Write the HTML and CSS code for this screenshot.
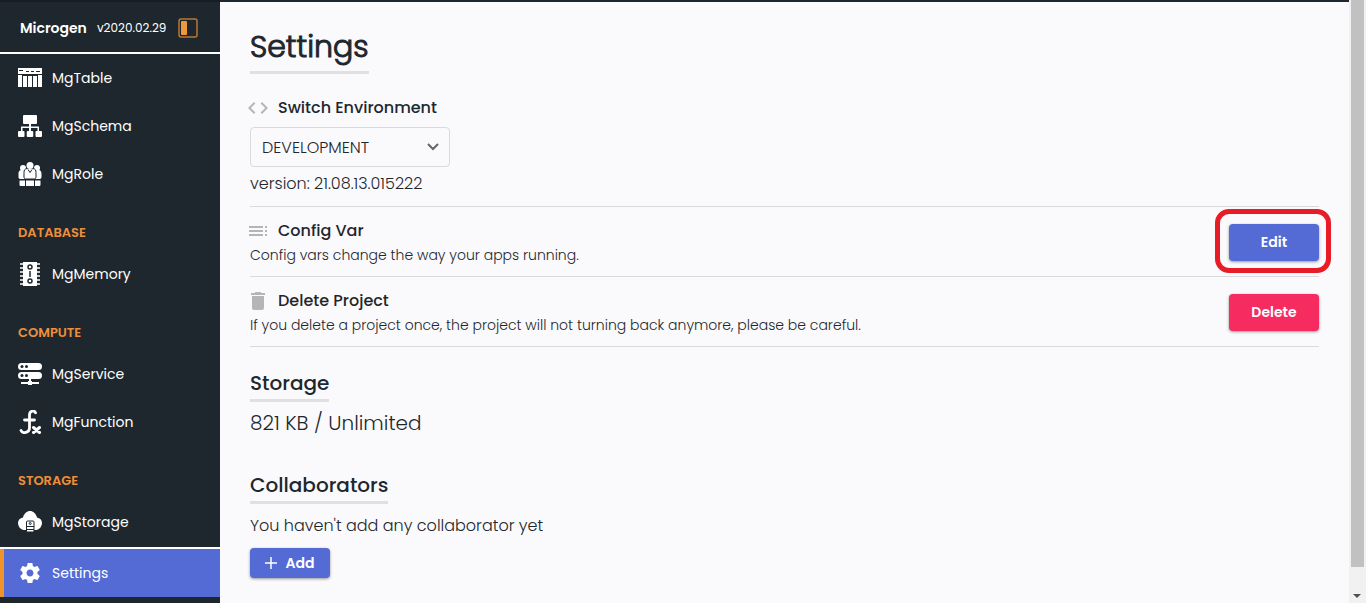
FILE: index.html
```
<!DOCTYPE html>
<html lang="en">
  <head>
    <meta charset="UTF-8" />
    <meta name="viewport" content="width=device-width, initial-scale=1.0" />
    <title>Microgen - Settings</title>
    <link rel="stylesheet" href="styles.css">
  </head>
  <body>
    <div class="app">
      <aside class="sidebar">
        <div class="brand">
          <strong class="brand-name">Microgen</strong>
          <span class="brand-version">v2020.02.29</span>
          <button class="toggle" type="button" aria-label="Toggle sidebar">
            <svg width="20" height="20" viewBox="0 0 20 20">
              <rect x="1" y="1" width="18" height="18" rx="2" fill="none" stroke="#b9782f" stroke-width="1.5" />
              <rect x="3" y="3" width="6" height="14" rx="1" fill="#f0993a" />
            </svg>
          </button>
        </div>

        <nav class="menu">
          <a class="menu-item" href="#table">
            <svg class="icon" viewBox="0 0 24 24" fill="#fff">
              <path fill-rule="evenodd" d="M0 2h24v6H0zM1 4v1h4V4zM8 5v1h3V5zM13 5v1h3V5zM18 5v1h4V5z" />
              <path d="M0 9h4v12H0zM5 10h4v11H5zM10 10h4v11h-4zM15 10h4v11h-4zM20 9h4v12h-4z" />
            </svg>
            MgTable
          </a>
          <a class="menu-item" href="#schema">
            <svg class="icon" viewBox="0 0 24 24" fill="#fff">
              <rect x="5" y="1" width="14" height="9" rx="1" />
              <path d="M11 9h2v3.500h8V17h-1.500v-3H13v3h-2v-3H4.500v3H3v-4.500h8z" />
              <rect y="17" width="6.500" height="6" rx="1" />
              <rect x="8.750" y="17" width="6.500" height="6" rx="1" />
              <rect x="17.500" y="17" width="6.500" height="6" rx="1" />
            </svg>
            MgSchema
          </a>
          <a class="menu-item" href="#role">
            <svg class="icon" viewBox="0 0 24 24" fill="#fff">
              <circle cx="5" cy="6" r="3" />
              <circle cx="19" cy="6" r="3" />
              <path d="M4 8C1 8 .5 10 .5 12v3c0 1.500 1 2 2 2h5L6 9zM20 8c3 0 3.500 2 3.500 4v3c0 1.500-1 2-2 2h-5L18 9z" />
              <path d="M9.500 6.500h5c3 0 3.500 2 3.500 4V15c0 1.500-1 2-2 2H8c-1 0-2-.5-2-2v-4.500c0-2 .5-4 3.500-4z" stroke="#1e272e" />
              <circle cx="12" cy="3.500" r="3.500" />
              <path d="M10 7.500l2 3 2-3" fill="none" stroke="#1e272e" />
              <path d="M1.500 18.500h5.500V24H3c-1 0-1.500-.5-1.500-1.500zM8 18.500h8V24H8zM17 18.500h5.500v4c0 1-.5 1.500-1.500 1.500h-4z" />
            </svg>
            MgRole
          </a>

          <h2 class="menu-title">DATABASE</h2>
          <a class="menu-item" href="#memory">
            <svg class="icon" viewBox="0 0 24 24" fill="#fff">
              <path d="M2 2h20M2 6h20M2 10h20M2 14h20M2 18h20M2 22h20" stroke="#fff" stroke-width="1.500" />
              <rect x="5" width="14" height="24" />
              <g fill="none" stroke="#1e272e" stroke-width="1.500">
                <circle cx="12" cy="5" r="2" />
                <circle cx="12" cy="19" r="2" />
                <path d="M12 9v6" />
              </g>
            </svg>
            MgMemory
          </a>

          <h2 class="menu-title">COMPUTE</h2>
          <a class="menu-item" href="#service">
            <svg class="icon" viewBox="0 0 24 24" fill="#fff">
              <rect y="1" width="24" height="7" rx="3.500" />
              <rect y="10" width="24" height="7" rx="3.500" />
              <path d="M11 16h2v3h1v1h7v2h-7v1h-4v-1H3v-2h7v-1h1z" />
              <g fill="#1e272e">
                <circle cx="4" cy="4.500" r="1.500" />
                <circle cx="8.500" cy="4.500" r="1.500" />
                <circle cx="4" cy="13.500" r="1.500" />
                <circle cx="8.500" cy="13.500" r="1.500" />
              </g>
            </svg>
            MgService
          </a>
          <a class="menu-item" href="#function">
            <svg class="icon" viewBox="0 0 24 24" fill="none" stroke="#fff" stroke-linecap="round">
              <path d="M17.500 2.800C16.500 0 11.500.500 11.500 5v13c0 5-7 6-8.500 2.500M6.500 10h10" stroke-width="2.800" />
              <path d="M15.500 17.500l6 5M21.500 17.500l-6 5" stroke-width="3" />
            </svg>
            MgFunction
          </a>

          <h2 class="menu-title">STORAGE</h2>
          <a class="menu-item" href="#storage">
            <svg class="icon" viewBox="0 0 24 24" fill="#fff">
              <path d="M5 7.500C6 3.500 9 1 12 1s6 2.500 7 6.500c3 .5 5 2.500 5 5.500s-2.500 7-6 7H6c-3.500 0-6-4-6-7s2-5 5-5.500z" />
              <g stroke="#1e272e">
                <rect x="8.500" y="11" width="7.500" height="11" rx="1" />
                <circle cx="12.200" cy="13.500" r="1" fill="none" />
                <path d="M9 16.500h7M9 19.500h7" />
              </g>
            </svg>
            MgStorage
          </a>
          <a class="menu-item active" href="#settings">
            <svg class="icon" viewBox="0 0 24 24" fill="#fff">
              <path d="M19.430 12.980c.04-.32.07-.64.07-.98s-.03-.66-.07-.98l2.110-1.650c.19-.15.24-.42.12-.64l-2-3.460c-.12-.22-.39-.3-.61-.22l-2.490 1c-.52-.4-1.080-.73-1.690-.98l-.38-2.650C14.460 2.180 14.250 2 14 2h-4c-.25 0-.46.18-.49.42l-.38 2.650c-.61.25-1.170.59-1.690.98l-2.490-1c-.23-.09-.49 0-.61.22l-2 3.460c-.13.22-.07.49.12.64l2.110 1.650c-.04.32-.07.65-.07.98s.03.66.07.98l-2.110 1.650c-.19.15-.24.42-.12.64l2 3.460c.12.22.39.3.61.22l2.490-1c.52.4 1.080.73 1.690.98l.38 2.650c.03.24.24.42.49.42h4c.25 0 .46-.18.49-.42l.38-2.650c.61-.25 1.170-.59 1.690-.98l2.490 1c.23.09.49 0 .61-.22l2-3.460c.12-.22.07-.49-.12-.64l-2.110-1.650zM12 15.500c-1.930 0-3.500-1.570-3.500-3.500s1.570-3.500 3.500-3.500 3.500 1.570 3.500 3.500-1.570 3.500-3.500 3.500z" />
            </svg>
            Settings
          </a>
        </nav>
      </aside>

      <main class="content">
        <h1 class="page-title">Settings</h1>

        <section class="environment">
          <label class="row-title" for="environment">
            <svg class="row-icon" viewBox="0 0 24 24" fill="#b5b5b5">
              <path d="M9.400 16.600L4.800 12l4.600-4.600L8 6l-6 6 6 6 1.400-1.400zm5.200 0l4.600-4.600-4.600-4.600L16 6l6 6-6 6-1.400-1.400z" />
            </svg>
            Switch Environment
          </label>
          <div class="select-box">
            <select id="environment">
              <option>DEVELOPMENT</option>
            </select>
            <svg class="chevron" width="12" height="8" viewBox="0 0 12 8">
              <path d="M1 1l5 5 5-5" fill="none" stroke="#666" stroke-width="2" />
            </svg>
          </div>
          <p class="version">version: 21.08.13.015222</p>
        </section>

        <section class="row">
          <div>
            <h3 class="row-title">
              <svg class="row-icon" viewBox="0 0 24 24" fill="#b5b5b5">
                <path d="M3 9h14V7H3v2zm0 4h14v-2H3v2zm0 4h14v-2H3v2zm16 0h2v-2h-2v2zm0-10v2h2V7h-2zm0 6h2v-2h-2v2z" />
              </svg>
              Config Var
            </h3>
            <p class="row-text">Config vars change the way your apps running.</p>
          </div>
          <div class="highlight">
            <button class="btn" type="button">Edit</button>
          </div>
        </section>

        <section class="row">
          <div>
            <h3 class="row-title">
              <svg class="row-icon" viewBox="0 0 24 24" fill="#b5b5b5">
                <path d="M6 19c0 1.100.9 2 2 2h8c1.100 0 2-.9 2-2V7H6v12zM19 4h-3.500l-1-1h-5l-1 1H5v2h14V4z" />
              </svg>
              Delete Project
            </h3>
            <p class="row-text">If you delete a project once, the project will not turning back anymore, please be careful.</p>
          </div>
          <button class="btn btn-danger" type="button">Delete</button>
        </section>

        <section class="block">
          <h2 class="block-title">Storage</h2>
          <p class="usage">821 KB / Unlimited</p>
        </section>

        <section class="block">
          <h2 class="block-title">Collaborators</h2>
          <p class="empty">You haven't add any collaborator yet</p>
          <button class="btn btn-small" type="button">
            <svg width="12" height="12" viewBox="0 0 12 12">
              <path d="M6 0v12M0 6h12" stroke="#fff" stroke-width="1.500" />
            </svg>
            Add
          </button>
        </section>
      </main>

      <div class="scrollbar" aria-hidden="true">
        <div class="thumb"></div>
        <div class="arrow"></div>
      </div>
    </div>
  </body>
</html>
```
FILE: styles.css
```
* {
  box-sizing: border-box;
}
body {
  margin: 0;
  font-family: Poppins, Inter, sans-serif;
  font-size: 16px;
  color: #1e272e;
  background-color: #fafafc;
}
h1,
h2,
h3,
p {
  margin: 0;
}
button,
select {
  font-family: inherit;
}
.app {
  display: flex;
  height: 100vh;
  overflow: hidden;
}

/* Sidebar */
.sidebar {
  flex: 0 0 220px;
  background-color: #1e272e;
  color: #fff;
}
.brand {
  display: flex;
  align-items: center;
  height: 54px;
  padding: 2px 22px 0 20px;
  border-top: 2px solid #171d23;
  border-bottom: 2px solid #fff;
}
.brand-name {
  font-size: 14px;
  font-weight: 600;
}
.brand-version {
  margin-left: 10px;
  font-size: 12px;
}
.toggle {
  display: flex;
  margin-left: auto;
  padding: 0;
  border: 0;
  background: none;
  cursor: pointer;
}
.menu-item {
  display: flex;
  align-items: center;
  gap: 10px;
  height: 48px;
  padding: 0 18px;
  color: #fff;
  font-size: 14px;
  text-decoration: none;
}
.icon {
  width: 24px;
  height: 24px;
}
.menu-title {
  padding: 25px 18px 7px;
  color: #ef8e3b;
  font-size: 13px;
  font-weight: 600;
  line-height: 20px;
}
.menu-item.active {
  height: 50px;
  margin-top: 1px;
  border-top: 2px solid #fff;
  background-color: #546bd6;
  box-shadow: inset 4px 0 #f0932b;
}

/* Content */
.content {
  flex: 1;
  padding: 21px 30px 0;
  border-top: 2px solid #1e272e;
}
.page-title,
.block-title {
  width: fit-content;
  border-bottom: 3px solid #e0e0e2;
  font-weight: 500;
}
.page-title {
  font-size: 30px;
  font-weight: 300;
  line-height: 48px;
  -webkit-text-stroke: 1px;
}
.environment {
  padding: 21px 0 10px;
  border-bottom: 1px solid #dadadc;
}
.row-title {
  display: flex;
  align-items: center;
  gap: 8px;
  font-size: 16px;
  font-weight: 500;
  line-height: 26px;
}
.row-icon {
  width: 24px;
  height: 24px;
  margin-left: -4px;
}
.select-box {
  position: relative;
  width: 200px;
  margin: 6px 0 4px;
}
.select-box select {
  display: block;
  width: 100%;
  height: 40px;
  padding: 0 11px;
  border: 1px solid #dadadc;
  border-radius: 4px;
  background-color: #fafafc;
  color: #1e272e;
  font-size: 16px;
  font-weight: 300;
  appearance: none;
}
.chevron {
  position: absolute;
  top: 16px;
  right: 11px;
  pointer-events: none;
}
.version {
  font-size: 16px;
  font-weight: 300;
  line-height: 25px;
}
.row {
  display: flex;
  align-items: center;
  justify-content: space-between;
  padding: 11px 0 10px;
  border-bottom: 1px solid #dadadc;
}
.row-text {
  font-size: 14px;
  font-weight: 300;
  line-height: 22px;
}
.btn {
  width: 90px;
  height: 37px;
  border: 0;
  border-radius: 4px;
  background-color: #546bd6;
  box-shadow: 0 1px 3px rgba(0, 0, 0, 0.4);
  color: #fff;
  font-size: 14px;
  font-weight: 600;
  cursor: pointer;
}
.btn-danger {
  background-color: #f62b60;
}
.btn-small {
  display: flex;
  align-items: center;
  justify-content: center;
  gap: 8px;
  width: 80px;
  height: 30px;
}
.highlight {
  position: relative;
}
.highlight::after {
  content: "";
  position: absolute;
  inset: -15px -12px -12px -14px;
  border: 5px solid #e81c26;
  border-radius: 14px;
  pointer-events: none;
}
.block {
  padding-top: 21px;
}
.block + .block {
  padding-top: 32px;
}
.block-title {
  padding-bottom: 1px;
  font-size: 20px;
  line-height: 30px;
}
.usage {
  margin-top: 6px;
  font-size: 20px;
  font-weight: 300;
  line-height: 30px;
}
.empty {
  margin: 10px 0;
  font-size: 16px;
  font-weight: 300;
  line-height: 24px;
}

/* Scrollbar */
.scrollbar {
  display: flex;
  flex-direction: column;
  flex: 0 0 17px;
  padding: 0 2px;
  background-color: #f1f1f1;
}
.thumb {
  flex: 1;
  background-color: #c1c1c1;
}
.arrow {
  height: 36px;
  padding: 27px 2px 0;
}
.arrow::after {
  content: "";
  display: block;
  width: 0;
  border: 4px solid transparent;
  border-top-color: #505050;
}
```
